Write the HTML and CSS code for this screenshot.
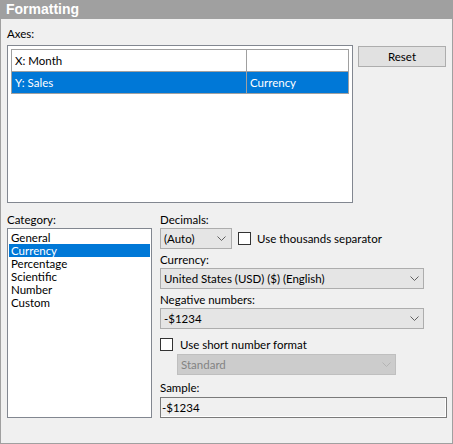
FILE: index.html
```html
<!DOCTYPE html>
<html>
<head>
<meta charset="utf-8">
<link rel="stylesheet" href="styles.css">
</head>
<body>
<div class="panel">
  <div class="header">Formatting</div>
  <div class="body">
    <div class="top">
      <div class="lbl axes-lbl">Axes:</div>
      <div class="axes-box">
        <div class="axes">
          <div class="arow">
            <div class="cell c1">X: Month</div>
            <div class="cell c2"></div>
          </div>
          <div class="arow sel">
            <div class="cell c1">Y: Sales</div>
            <div class="cell c2">Currency</div>
          </div>
        </div>
      </div>
      <div class="btn">Reset</div>
    </div>
    <div class="bottom">
      <div class="left">
        <div class="flabel">Category:</div>
        <ul class="list">
          <li>General</li>
          <li class="sel">Currency</li>
          <li>Percentage</li>
          <li>Scientific</li>
          <li>Number</li>
          <li>Custom</li>
        </ul>
      </div>
      <div class="right">
        <div class="flabel">Decimals:</div>
        <div class="row">
          <div class="combo dec"><span>(Auto)</span><svg class="chev" width="9" height="5" viewBox="0 0 9 5"><polyline points="0.5,0.5 4.5,4.5 8.5,0.5" fill="none" stroke="#606060" stroke-width="1"/></svg></div>
          <div class="check thousands"><span class="box"></span><span>Use thousands separator</span></div>
        </div>
        <div class="flabel">Currency:</div>
        <div class="combo cur"><span>United States (USD) ($) (English)</span><svg class="chev" width="9" height="5" viewBox="0 0 9 5"><polyline points="0.5,0.5 4.5,4.5 8.5,0.5" fill="none" stroke="#606060" stroke-width="1"/></svg></div>
        <div class="flabel">Negative numbers:</div>
        <div class="combo cur"><span>-$1234</span><svg class="chev" width="9" height="5" viewBox="0 0 9 5"><polyline points="0.5,0.5 4.5,4.5 8.5,0.5" fill="none" stroke="#606060" stroke-width="1"/></svg></div>
        <div class="check short"><span class="box"></span><span>Use short number format</span></div>
        <div class="combo std disabled"><span>Standard</span><svg class="chev" width="9" height="5" viewBox="0 0 9 5"><polyline points="0.5,0.5 4.5,4.5 8.5,0.5" fill="none" stroke="#b4b4b4" stroke-width="1"/></svg></div>
        <div class="flabel sample-lbl">Sample:</div>
        <div class="textbox">-$1234</div>
      </div>
    </div>
  </div>
</div>
</body>
</html>
```
FILE: styles.css
```css
html, body {
  margin: 0;
  padding: 0;
  background: #f0f0f0;
}
.panel {
  width: 453px;
  height: 444px;
  font-family: Lato, "Liberation Sans", sans-serif;
  font-size: 11.5px;
  color: #000;
}
.header {
  height: 19px;
  line-height: 19px;
  background: #a0a0a0;
  color: #fff;
  font-family: "Liberation Sans", Arial, sans-serif;
  font-weight: bold;
  font-size: 14px;
  padding-left: 6px;
}
.body {
  box-sizing: border-box;
  height: 425px;
  border: 1px solid #a0a0a0;
  border-top: none;
  background: #f0f0f0;
  padding: 7px 6px 0 6px;
}
.top {
  display: grid;
  grid-template-columns: 346px 88px;
  column-gap: 5px;
}
.lbl {
  line-height: 15px;
  margin-bottom: 4px;
}
.axes-lbl { grid-column: 1; grid-row: 1; }
.axes-box {
  grid-column: 1;
  grid-row: 2;
  box-sizing: border-box;
  height: 158px;
  border: 1px solid #828790;
  background: #fff;
  padding: 3px;
}
.axes {
  border-top: 1px solid #a0a0a0;
  border-left: 1px solid #a0a0a0;
}
.arow {
  display: grid;
  grid-template-columns: 235px 102px;
}
.cell {
  box-sizing: border-box;
  height: 22px;
  line-height: 21px;
  border-right: 1px solid #a0a0a0;
  border-bottom: 1px solid #a0a0a0;
  padding-left: 3px;
  white-space: nowrap;
}
.arow.sel .cell {
  background: #0078d7;
  color: #fff;
}
.btn {
  grid-column: 2;
  grid-row: 2;
  align-self: start;
  margin-top: 1px;
  box-sizing: border-box;
  height: 21px;
  border: 1px solid #adadad;
  background: #e1e1e1;
  text-align: center;
  line-height: 19px;
}
.bottom {
  margin-top: 6px;
  display: grid;
  grid-template-columns: 145px 287px;
  column-gap: 8px;
}
.flabel {
  padding-top: 3px;
  padding-bottom: 1px;
  line-height: 15px;
}
.list {
  list-style: none;
  margin: 0;
  box-sizing: border-box;
  height: 190px;
  border: 1px solid #828790;
  background: #fff;
  padding: 2px 1px 1px 1px;
}
.list li {
  height: 13px;
  line-height: 13px;
  padding-left: 2px;
}
.list li.sel {
  background: #0078d7;
  color: #fff;
}
.row {
  display: flex;
  align-items: center;
}
.combo {
  box-sizing: border-box;
  height: 21px;
  border: 1px solid #adadad;
  background: #e5e5e5;
  display: flex;
  align-items: center;
  justify-content: space-between;
  padding: 0 4px 0 3px;
  white-space: nowrap;
}
.combo.dec { width: 72px; padding-right: 5px; }
.combo.cur { width: 264px; }
.combo.std {
  width: 219px;
  margin-left: 17px;
  margin-top: 2px;
}
.combo.disabled {
  background: #cccccc;
  border-color: #bfbfbf;
  color: #838383;
}
.chev { display: block; }
.check {
  display: flex;
  align-items: center;
  height: 15px;
  line-height: 15px;
}
.check .box {
  box-sizing: border-box;
  width: 13px;
  height: 13px;
  border: 1px solid #333;
  background: #fff;
  margin-right: 6px;
}
.thousands { margin-left: 6px; }
.short { margin-top: 8px; }
.short .box { margin-right: 7px; }
.sample-lbl {
  padding-top: 5px;
  padding-bottom: 2px;
}
.textbox {
  box-sizing: border-box;
  height: 21px;
  border: 1px solid #7a7a7a;
  box-shadow: inset -1px -1px 0 #fff;
  background: #f0f0f0;
  line-height: 19px;
  padding-left: 1px;
}
```
